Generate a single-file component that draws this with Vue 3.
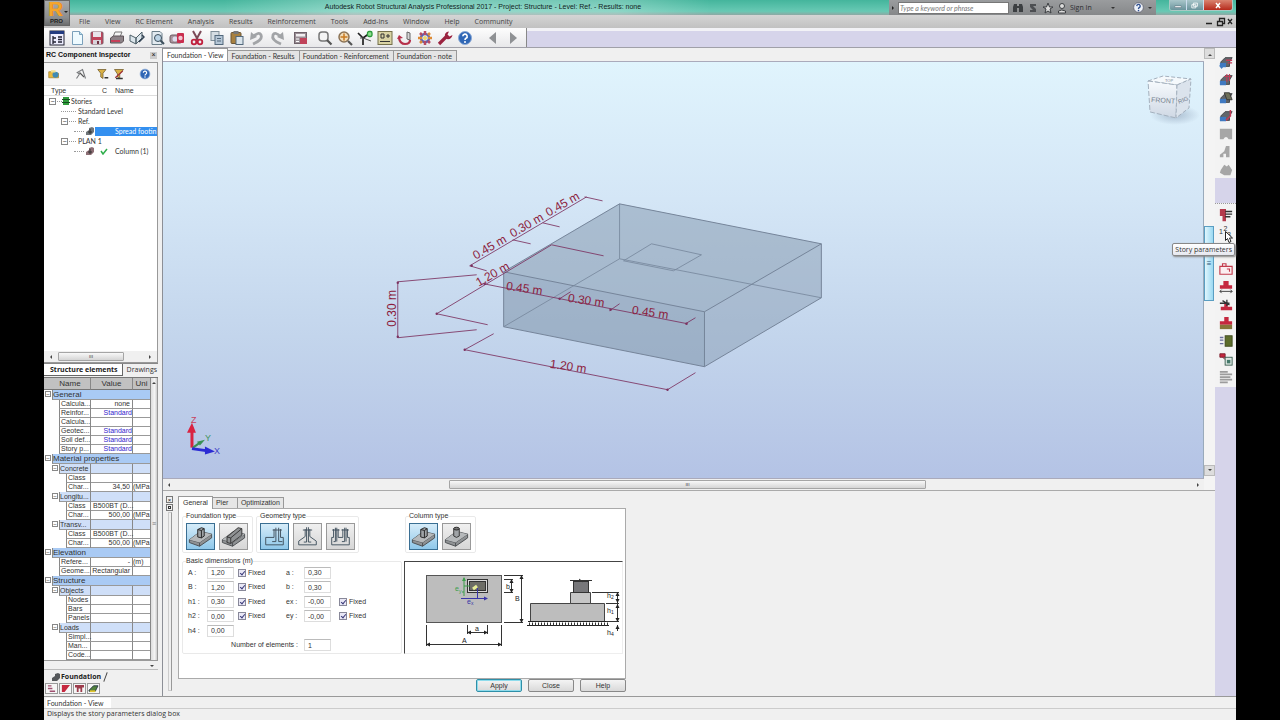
<script setup>
import { ref } from 'vue'

const menus = ['File', 'View', 'RC Element', 'Analysis', 'Results', 'Reinforcement', 'Tools', 'Add-Ins', 'Window', 'Help', 'Community']

const help = '<circle cx="8" cy="8" r="6.5" fill="#2f66b5" stroke="#8aa9d6"/><path d="M5.8 6.3a2.2 2.2 0 1 1 3.2 2q-1 .6-1 1.6" fill="none" stroke="#fff" stroke-width="1.6"/><circle cx="8" cy="12" r="1" fill="#fff"/>'

const tools = [
  { name: 'Inspector', art: '<rect x="1" y="1" width="14" height="14" fill="#eef" stroke="#223"/><rect x="1" y="1" width="14" height="3" fill="#223a80"/><path d="M4 6v8M4 8h3M4 12h3M9 7h4M9 9.500h4M9 12h4" stroke="#223" stroke-width="1.300"/>' },
  { name: 'New', art: '<path d="M3.500 1.500h7l3 3v10h-10z" fill="#eefaff" stroke="#7ba0bb"/><path d="M10.500 1.500v3h3" fill="#b9dff0" stroke="#7ba0bb"/>' },
  { name: 'Save', art: '<rect x="2" y="2" width="12" height="12" rx="1" fill="#c0435a" stroke="#7d5a68"/><rect x="4" y="2" width="8" height="5" fill="#e9e4ea"/><rect x="4" y="10" width="8" height="4" fill="#d9d3da"/><rect x="8" y="11" width="2" height="3" fill="#703040"/>' },
  { name: 'Print', art: '<path d="M4 7l2-5h7l-2 5" fill="#f5f5f5" stroke="#777"/><path d="M1.500 8l3-2h10v5l-2 2h-11z" fill="#8d8388" stroke="#5d5358"/><path d="M2 11h9" stroke="#c5405a" stroke-width="2"/>' },
  { name: 'Calculation note', art: '<path d="M1 5l6 3v6l-6-3zM7 8l6-6v6l-6 6z" fill="#dce6ec" stroke="#4d5f68"/><path d="M10 12l5-5-2-2" fill="none" stroke="#345" stroke-width="1.500"/>' },
  { name: 'Preview', art: '<path d="M3 1.500h8l2 2v11H3z" fill="#e2eaf0" stroke="#6a7d88"/><circle cx="9" cy="8" r="3.500" fill="#bcd4e6" stroke="#3d4f5c"/><path d="M11.500 10.500l3.500 3.500" stroke="#3d4f5c" stroke-width="2"/>' },
  { name: 'Screen capture', art: '<rect x="1" y="5" width="12" height="8" rx="2" fill="#a8949c" stroke="#6d5a62"/><circle cx="6" cy="9" r="2.500" fill="#dde"/><rect x="8" y="3" width="7" height="10" rx="1" fill="#c92e4e"/><circle cx="11.500" cy="8" r="2.200" fill="#f2c6d0"/>' },
  { name: 'Cut', art: '<path d="M4 1l5 9M12 1L7 10" stroke="#7c4a58" stroke-width="2"/><circle cx="5" cy="12" r="2.300" fill="none" stroke="#c0203e" stroke-width="1.800"/><circle cx="11" cy="12" r="2.300" fill="none" stroke="#c0203e" stroke-width="1.800"/>' },
  { name: 'Copy', art: '<rect x="2" y="1.500" width="8" height="9" fill="#d5dde3" stroke="#7e8d98"/><rect x="6" y="5.500" width="8" height="9" fill="#b5c6d6" stroke="#52687c"/><path d="M8 8.500h4M8 11h4" stroke="#52687c"/>' },
  { name: 'Paste', art: '<rect x="2" y="2.500" width="10" height="11" rx="1" fill="#a8803f" stroke="#6b5535"/><rect x="4.500" y="1" width="5" height="3" fill="#777"/><rect x="7" y="6.500" width="7" height="8" fill="#d9e3ea" stroke="#52687c"/>' },
  { name: 'Undo', art: '<path d="M4 14Q14 10 12 5Q10 1 4 7" fill="none" stroke="#a2a4a7" stroke-width="2.800"/><path d="M1 10l1-8 6 5z" fill="#a2a4a7"/>' },
  { name: 'Redo', art: '<path d="M12 14Q2 10 4 5Q6 1 12 7" fill="none" stroke="#a2a4a7" stroke-width="2.800"/><path d="M15 10l-1-8-6 5z" fill="#a2a4a7"/>' },
  { name: 'Calculator', gap: true, art: '<rect x="1.500" y="2.500" width="12" height="11" fill="#9a8f96" stroke="#6f626a"/><rect x="3" y="4" width="9" height="2.500" fill="#f1eef0"/><rect x="7" y="8" width="7" height="6" fill="#c0435a"/><path d="M3 9h3M3 11.500h3" stroke="#fff"/>' },
  { name: 'Zoom window', gap: true, art: '<rect x="2" y="2" width="9" height="9" rx="3" fill="#f4f4f4" stroke="#777" stroke-width="1.500"/><path d="M10 10l4.500 4.500" stroke="#555" stroke-width="2.200"/>' },
  { name: 'Zoom all', art: '<circle cx="7" cy="7" r="5" fill="#f2dcb8" stroke="#8c7355" stroke-width="1.500"/><path d="M7 3.500v7M3.500 7h7" stroke="#c87a20" stroke-width="1.500"/><path d="M11 11l4 4" stroke="#555" stroke-width="2.200"/>' },
  { name: 'Axes', art: '<path d="M1 3l5 5v7M6 8l7-5" fill="none" stroke="#222" stroke-width="1.700"/><path d="M6 8H3M6 8l8 3" stroke="#555"/><rect x="10.500" y="1.500" width="4.500" height="5" rx="1.500" fill="#8fe08f" stroke="#2a9a3a" stroke-width="1.300"/>' },
  { name: 'Display', art: '<rect x="1" y="1.500" width="14" height="13" fill="#d9d3a4" stroke="#75704a"/><path d="M4 4h3v4H4zM9 6h4M11 4v4M3 11.500h10" fill="none" stroke="#333"/>' },
  { name: 'Rotate view', art: '<path d="M10 2l3 1v7l-3-1z" fill="#d6d6d6" stroke="#666"/><path d="M2 8q1 6 6 6q5 0 5-4" fill="none" stroke="#b6304a" stroke-width="2.200"/><path d="M0 9l2-4 4 3z" fill="#b6304a"/>' },
  { name: 'Job preferences', art: '<circle cx="8" cy="8" r="4" fill="none" stroke="#5a61b5" stroke-width="2.500"/><path d="M8 1v4M8 11v4M3 3l2 2M11 11l2 2" stroke="#b84a62" stroke-width="2.500"/><path d="M1 8h4M11 8h4M3 13l2-2M11 5l2-2" stroke="#dd8a35" stroke-width="2.500"/><circle cx="8" cy="8" r="2" fill="#e8d670"/>' },
  { name: 'Tools', art: '<path d="M2 14l7-7" stroke="#9b2340" stroke-width="3.200"/><path d="M8 7q-1-5 4-5.500l-1.500 3 2 2 3-1.500q-1 5-6 4z" fill="#9b2340"/>' },
  { name: 'Help', art: help },
  { name: 'Back', wide: true, art: '<path d="M11 2v12L4 8z" fill="#8f9194"/>' },
  { name: 'Forward', art: '<path d="M5 2v12l7-6z" fill="#8f9194"/>' }
]

const inspectorTools = [
  { name: 'Open', art: '<path d="M1 5h6l1 2h6v6H1z" fill="#e8b83c" stroke="#a5842f"/><circle cx="10" cy="9" r="4" fill="#3f8bb5"/><path d="M4 3h6v3H4z" fill="#f3e08e"/>' },
  { name: 'Sketch', art: '<path d="M2 14l4-6-3-2 7-4 4 12" fill="none" stroke="#77797c" stroke-width="1.500"/><path d="M6 6l6 6" stroke="#555" stroke-width="1.500"/>' },
  { name: 'Filter', art: '<path d="M1 2h11l-4 5v7l-3-2V7z" fill="#d9b044" stroke="#6f5a2b"/><path d="M10 13h5" stroke="#333" stroke-width="2"/>' },
  { name: 'Filter off', art: '<path d="M2 2h12l-5 6v6l-3-2V8z" fill="#d9b044" stroke="#6f5a2b"/><path d="M3 13l10-9" stroke="#a5333a" stroke-width="1.500"/><path d="M4 14h9" stroke="#333" stroke-width="2"/>' },
  { name: 'Inspector help', art: help }
]

const reinf = (extra) => '<path d="M2 8l5-5h8l-3 5v5H3z" fill="#62666b" stroke="#3e4145"/><path d="M1 9h7v5H1z" fill="#3f79c0"/>' + extra
const sideTop = [
  { name: 'Slab reinforcement', art: reinf('<path d="M8 6h7M10 9h5" stroke="#c23b56" stroke-width="1.500"/><path d="M0 12h6l-3 4z" fill="#3f79c0"/>') },
  { name: 'Footing reinforcement', art: reinf('<path d="M9 1v9M12 1v8M6 4h8" stroke="#c23b56" stroke-width="1.300"/>') },
  { name: 'Beam reinforcement', art: reinf('<path d="M6 2h6l3 8H9z" fill="#6e6f58" stroke="#333"/>') },
  { name: 'Wall reinforcement', art: reinf('<path d="M13 1v7l-5 5" fill="none" stroke="#c23b56" stroke-width="1.800"/>') },
  { name: 'Opening', art: '<path d="M1 2h14v12h-4q-3-5-6 0H1z" fill="#a6a6a6"/>' },
  { name: 'Stair', art: '<path d="M8 1h4v13h-4v-4H5v4H1v-3l5-4z" fill="#a6a6a6"/>' },
  { name: 'Hand', art: '<path d="M2 8l4-6 3 2 2-2 4 6-2 6H6l-5-3z" fill="#a6a6a6"/>' }
]
const sideBottom = [
  { name: 'Rebar list', art: '<path d="M1 1h7v14H4V9H1z" fill="#b43a4c"/><path d="M7 4h8M7 7h8M7 10h6" stroke="#333" stroke-width="1.600"/>' },
  { name: 'Story', art: '<g font-family="Liberation Sans, sans-serif" font-size="8" fill="#333"><text x="0" y="9">1</text><text x="5" y="6">2</text><text x="9" y="12">3</text></g>' },
  { name: 'Levels', art: '<path d="M2 8h12" stroke="#555"/>' },
  { name: 'Footing options', art: '<path d="M1 5h14v9H1zM4 5V2h4v3" fill="#fbeef0" stroke="#c23b4c" stroke-width="1.300"/><path d="M9 8h3v3" fill="none" stroke="#c23b4c" stroke-width="1.300"/>' },
  { name: 'Dimensions', art: '<path d="M5 1h6v5h4v4H1V6h4z" fill="#c5283f"/><path d="M1 13h14M3 11l-2 2 2 2M13 11l2 2-2 2" fill="none" stroke="#333"/>' },
  { name: 'Loads', art: '<path d="M6 5h4v5h5v4H2v-4h4z" fill="#c5283f"/><path d="M1 6h11M9 2v7M4 3l8 5" stroke="#333" stroke-width="1.500"/>' },
  { name: 'Soil', art: '<path d="M6 1h5v5h4v4H1V6h5z" fill="#c5283f"/><rect x="1" y="10" width="14" height="5" fill="#86763a"/>' },
  { name: 'Soil profile', art: '<rect x="7" y="2" width="8" height="12" fill="#5d6d2c" stroke="#3d481c"/><path d="M1 4h4M1 7h4M1 11h4" stroke="#6c6f9c" stroke-width="1.500"/>' },
  { name: 'Calculate', art: '<path d="M1 2h6v4H1zM4 6l5 4" fill="#c5283f" stroke="#7a1c2c"/><rect x="7" y="6" width="8" height="9" fill="#dfe9e4" stroke="#33574a"/><path d="M9 9h4v4H9z" fill="#44796a"/>' },
  { name: 'Notes', art: '<path d="M1 2h9M1 5h14M1 8h12M1 11h14M1 14h9" stroke="#9c9c9c" stroke-width="2"/>' }
]

const tree = [
  { text: 'Stories', depth: 0, box: true, icon: 'story' },
  { text: 'Standard Level', depth: 1 },
  { text: 'Ref.', depth: 1, box: true },
  { name: 'Spread footin', depth: 2, icon: 'part', selected: true },
  { text: 'PLAN 1', depth: 1, box: true },
  { name: 'Column (1)', depth: 2, icon: 'part', check: true }
]

const props = [
  { l: 0, n: 'General', h: true },
  { l: 1, n: 'Calcula...', v: 'none' },
  { l: 1, n: 'Reinfor...', v: 'Standard', link: true },
  { l: 1, n: 'Calcula...' },
  { l: 1, n: 'Geotec...', v: 'Standard', link: true },
  { l: 1, n: 'Soil def...', v: 'Standard', link: true },
  { l: 1, n: 'Story p...', v: 'Standard', link: true },
  { l: 0, n: 'Material properties', h: true },
  { l: 1, n: 'Concrete', h: true },
  { l: 2, n: 'Class' },
  { l: 2, n: 'Char...', v: '34,50', u: '(MPa' },
  { l: 1, n: 'Longitu...', h: true },
  { l: 2, n: 'Class', v: 'B500BT (D...', start: true },
  { l: 2, n: 'Char...', v: '500,00', u: '(MPa' },
  { l: 1, n: 'Transv...', h: true },
  { l: 2, n: 'Class', v: 'B500BT (D...', start: true },
  { l: 2, n: 'Char...', v: '500,00', u: '(MPa' },
  { l: 0, n: 'Elevation', h: true },
  { l: 1, n: 'Refere...', v: '-', u: '(m)' },
  { l: 1, n: 'Geome...', v: 'Rectangular' },
  { l: 0, n: 'Structure', h: true },
  { l: 1, n: 'Objects', h: true },
  { l: 2, n: 'Nodes' },
  { l: 2, n: 'Bars' },
  { l: 2, n: 'Panels' },
  { l: 1, n: 'Loads', h: true },
  { l: 2, n: 'Simpl...' },
  { l: 2, n: 'Man...' },
  { l: 2, n: 'Code...' }
]

const slab = '<path d="M2 17L14 8l12 3v4L13 24 2 20z" fill="#8f9294" stroke="#4a4d50"/><path d="M2 17l11 3v4M13 20l13-9" fill="none" stroke="#4a4d50"/><path d="M2 17L14 8l12 3-13 9z" fill="#b6b9bb"/>'
const square = slab + '<path d="M11 6l4-2 3 1v8l-3 2-4-1z" fill="#9fa3a6" stroke="#222"/><path d="M11 6l4 1 3-2M15 7v8" fill="none" stroke="#222"/>'
const round = slab + '<path d="M11 5v8q3 3 6 0V5z" fill="#9fa3a6" stroke="#333"/><ellipse cx="14" cy="5" rx="3" ry="1.500" fill="#777" stroke="#222"/>'
const strip = slab + '<path d="M7 14l12-10 4 1v7l-12 9-4-1z" fill="#8f9294" stroke="#333"/><path d="M7 14l4 1 12-10M11 15v6" fill="none" stroke="#333"/>'
const line = (d) => `<path d="${d}" fill="none" stroke="#3f4f5c"/>`
const groups = [
  { title: 'Foundation type', cls: 'found', items: [{ n: 'Spread', on: true, art: square }, { n: 'Continuous', art: strip }] },
  { title: 'Geometry type', cls: 'geo', items: [
    { n: 'Block', on: true, art: line('M4.500 14.500h9v-9M20.500 5.500v9h3v8h-19v-8M15.500 4v15h-4M18.500 4v15h4M12 6.500h10') },
    { n: 'Sloped', art: line('M11.500 5.500v8l-7 5v4h19v-4l-7-5v-8M13 3.500v16h-3M15 3.500v16h3M9 6.500h10') },
    { n: 'Double', art: line('M6.500 5.500v9h-2v8h19v-8h-2v-9M11.500 5.500v9h5v-9M8.500 4v15h-2M10 4v15M18.500 4v15h-3M20 4v15M5 6.500h8M15 6.500h8') }] },
  { title: 'Column type', cls: 'coltype', items: [{ n: 'Rectangular column', on: true, art: square }, { n: 'Round column', art: round }] }
]

const dims = ref([
  { k: 'A', v: '1,20', fixed: true },
  { k: 'B', v: '1,20', fixed: true },
  { k: 'h1', v: '0,30', fixed: true },
  { k: 'h2', v: '0,00', fixed: true },
  { k: 'h4', v: '0,00' }
])
const offsets = ref([
  { k: 'a', v: '0,30' },
  { k: 'b', v: '0,30' },
  { k: 'ex', v: '-0,00', fixed: true },
  { k: 'ey', v: '-0,00', fixed: true }
])
const count = ref('1')
const viewTabs = ['View', 'Results', 'Reinforcement', 'note']
</script>

<template>
  <div class="desk">
    <div class="frame">
      <button class="logo" aria-label="Application menu"><span class="r">R</span><span class="pro">PRO</span><i></i></button>

      <header class="title">
        <h1>Autodesk Robot Structural Analysis Professional 2017 - Project: Structure - Level: Ref. - Results: none</h1>
        <div class="info">
          <span class="tri"></span>
          <input type="text" placeholder="Type a keyword or phrase" aria-label="Type a keyword or phrase">
          <svg class="infoart" viewBox="0 0 56 14">
            <g fill="#3c3f42"><path d="M4 3h3v8H3V6zM9 3h3l1 3v5H9zM7 5h2v2H7z" /><path d="M20 3h6v2h-3l3 3v3h-6V9h3l-3-3z" opacity=".8" /></g>
            <path d="M38 2l1.500 4H43l-3 2 1 4-3-2-3 2 1-4-3-2h3.500z" fill="#ddd" stroke="#3c3f42" />
            <circle cx="52" cy="5" r="2.500" fill="#ddd" stroke="#3c3f42" /><path d="M48.500 12v-2q3-2 7 0v2z" fill="#ddd" stroke="#3c3f42" />
          </svg>
          <button class="sign">Sign In</button>
          <span class="caret"></span>
          <svg class="q" viewBox="0 0 16 16"><circle cx="8" cy="8" r="7" fill="#eef2f8" stroke="#556" /><path d="M5.500 6a2.500 2.500 0 1 1 3.500 2.300q-1 .6-1 1.700" fill="none" stroke="#2f4f90" stroke-width="2" /><circle cx="8" cy="12.500" r="1.200" fill="#2f4f90" /></svg>
          <span class="caret"></span>
        </div>
        <div class="winbtns">
          <button aria-label="Minimize"><svg viewBox="0 0 20 11"><path d="M6 6h8v2H6z" fill="#fff" stroke="#456" stroke-width=".5" /></svg></button>
          <button aria-label="Restore"><svg viewBox="0 0 20 11"><path d="M8 2.500h5v4h-5zM6 4.500h5v4H6z" fill="none" stroke="#fff" /></svg></button>
          <button class="x" aria-label="Close window"><svg viewBox="0 0 20 11"><path d="M8 3l4 5M12 3L8 8" stroke="#fff" stroke-width="1.500" /></svg></button>
        </div>
      </header>

      <nav class="menu">
        <button v-for="m in menus" :key="m">{{ m }}</button>
        <svg class="mdi" viewBox="0 0 30 12"><path d="M2 7.500h6M13.500 5.500h5v4h-5zM15.500 5V2.500h5v5h-2M24 3l4 5M28 3l-4 5" fill="none" stroke="#222" stroke-width="1.300" /></svg>
      </nav>

      <div class="bar">
        <div class="tools">
          <button v-for="t in tools" :key="t.name" :class="{ gap: t.gap, wide: t.wide }" :aria-label="t.name"><svg viewBox="0 0 16 16" v-html="t.art"></svg></button>
        </div>
        <div class="rest"></div>
      </div>

      <main class="work">
        <aside class="left">
          <div class="ihead"><b>RC Component Inspector</b><button aria-label="Close inspector">×</button></div>
          <div class="ibox">
            <div class="itools">
              <button v-for="t in inspectorTools" :key="t.name" :aria-label="t.name"><svg viewBox="0 0 16 16" v-html="t.art"></svg></button>
            </div>
            <div class="ihdr"><span>Type</span><span>C</span><span>Name</span></div>
            <ul class="tree">
              <li v-for="(r, i) in tree" :key="i" :class="['d' + r.depth, { sel: r.selected }]">
                <span class="branch"><i v-if="r.box">−</i></span>
                <svg v-if="r.icon === 'story'" class="ico" viewBox="0 0 8 8"><path d="M1 0h6v8H1z" fill="#2f9c3c" /><path d="M0 2.500h8M0 5.500h8" stroke="#174d20" /></svg>
                <svg v-if="r.icon === 'part'" class="ico" viewBox="0 0 8 8"><path d="M0 5l3-2V1l3-1 2 1v4L5 8H0z" :fill="r.check ? '#8c6e74' : '#6f7478'" /><path d="M2 5h4M4 2v5" stroke="#333" /></svg>
                <span v-if="r.text">{{ r.text }}</span>
                <span v-if="r.name" class="state"><svg v-if="r.check" viewBox="0 0 8 8"><path d="M1 4l2 3 4-5" fill="none" stroke="#2fae4b" stroke-width="1.500" /></svg></span>
                <span v-if="r.name" class="nm">{{ r.name }}</span>
              </li>
            </ul>
            <div class="hs"><i class="al"></i><span class="thumb">ııı</span><i class="ar"></i></div>
          </div>
          <div class="itabs"><button class="on">Structure elements</button><button>Drawings</button></div>

          <div class="pgrid">
            <table>
              <colgroup><col class="c1"><col class="c2"><col class="c3"></colgroup>
              <thead><tr><th>Name</th><th>Value</th><th>Uni</th></tr></thead>
              <tbody>
                <tr v-for="(p, i) in props" :key="i" :class="['l' + p.l, { h: p.h, top: p.h && p.l === 0 }]">
                  <td :colspan="p.h && p.l === 0 ? 3 : 1" class="n"><div><i v-if="p.h">−</i><span>{{ p.n }}</span></div></td>
                  <template v-if="!(p.h && p.l === 0)">
                    <td :class="['v', { start: p.start, link: p.link }]">{{ p.v }}</td>
                    <td class="u">{{ p.u }}</td>
                  </template>
                </tr>
              </tbody>
            </table>
            <div class="pscroll"><i class="au"></i><span>≡</span></div>
          </div>
          <div class="pfoot"><i class="ad"></i></div>
          <div class="ftab"><svg viewBox="0 0 8 8"><path d="M0 5l3-2V1l3-1 2 1v4L5 8H0z" fill="#55585b" /></svg><b>Foundation</b><em></em></div>
          <div class="ficons">
            <button aria-label="Geometry"><svg viewBox="0 0 12 10"><path d="M2 2h4M2 5h5M4 8h6" stroke="#a05070" stroke-width="1.500" /></svg></button>
            <button aria-label="Loads view"><svg viewBox="0 0 12 10"><path d="M2 1h9L5 9H2z" fill="#c5283f" /></svg></button>
            <button aria-label="Reinforcement view"><svg viewBox="0 0 12 10"><path d="M1 1h10v3H9v5H7V5H5v4H3V4H1z" fill="#9c3c4c" /></svg></button>
            <button aria-label="Drawing view"><svg viewBox="0 0 12 10"><path d="M1 7l5-5h5L8 8H1z" fill="#51813b" stroke="#234" /><path d="M2 8h6" stroke="#e3c62f" stroke-width="2" /></svg></button>
          </div>
        </aside>

        <section class="center">
          <div class="upper">
            <div class="vcol">
              <div class="vtabs"><button v-for="(t, i) in viewTabs" :key="t" :class="{ on: i === 0 }">Foundation - {{ t }}</button></div>
              <div class="view">
                <svg viewBox="163 62 1041 415" preserveAspectRatio="xMinYMin meet">
                  <defs>
                    <linearGradient id="side" x1="0" y1="0" x2="0" y2="1"><stop offset="0" stop-color="#f7fafd" /><stop offset="1" stop-color="#cfd8e4" /></linearGradient>
                    <radialGradient id="shade"><stop offset="0" stop-color="#8b9db5" stop-opacity=".6" /><stop offset="1" stop-color="#8b9db5" stop-opacity="0" /></radialGradient>
                  </defs>
                  <path d="M620 204L822 244V298L705 367L504 327V272Z" fill="#8699ae" fill-opacity=".46" />
                  <path d="M504 272L705 312V367L504 327Z" fill="#8194ae" fill-opacity=".22" />
                  <path d="M620 204L822 244L705 312L504 272Z" fill="#8fa5b4" fill-opacity=".12" />
                  <g fill="none" stroke="#75859a" stroke-width="1">
                    <path d="M620 204L822 244L705 312L504 272ZM504 272V327L705 367V312M705 367L822 298V244" />
                    <path d="M620 204V259L822 298M620 259L504 327M652 244L702 255L674 271L624 261Z" stroke-opacity=".8" />
                  </g>
                  <g fill="none" stroke="#7c3260" stroke-width="1" stroke-opacity=".85">
                    <path d="M470 266L587 197M470 266L487 271M513 240L531 244M543 223L560 227M585 197L603 201" />
                    <path d="M437 314L552 245L604 256M437 314L488 325" />
                    <path d="M398 282V338M398 282L477 275M398 338L477 330" />
                    <path d="M484 284L688 324M560 299L571 292M610 311L620 304M686 324L696 318" />
                    <path d="M465 350L668 390L696 373M465 350L494 334" />
                  </g>
                  <g fill="#7c3260"><circle v-for="(c, i) in [[472,266],[437,314],[398,283],[398,337],[465,350],[668,390],[560,299],[611,310],[687,324],[485,284]]" :key="i" :cx="c[0]" :cy="c[1]" r="1.200" /></g>
                  <g class="dim">
                    <text transform="translate(476 260) rotate(-30)">0.45 m</text>
                    <text transform="translate(513 238) rotate(-30)">0.30 m</text>
                    <text transform="translate(549 217) rotate(-30)">0.45 m</text>
                    <text transform="translate(479 287) rotate(-30)">1.20 m</text>
                    <text transform="translate(396 327) rotate(-90)">0.30 m</text>
                    <text transform="translate(506 290) rotate(8)">0.45 m</text>
                    <text transform="translate(568 302) rotate(8)">0.30 m</text>
                    <text transform="translate(632 314) rotate(8)">0.45 m</text>
                    <text transform="translate(550 368) rotate(8)">1.20 m</text>
                  </g>
                  <g>
                    <path d="M192 448V428" stroke="#d92342" stroke-width="3" /><path d="M187 433L192 423L196 433Z" fill="#d92342" />
                    <path d="M193 448L200 443" stroke="#3a9154" stroke-width="2" /><path d="M197 442L205 440L200 446Z" fill="#3a9154" />
                    <path d="M192 449L206 451" stroke="#2b2bd4" stroke-width="3" /><path d="M205 447L215 452L205 455Z" fill="#2b2bd4" />
                    <g font-size="9"><text x="191" y="423" fill="#c8405c">Z</text><text x="205" y="441" fill="#3f9460">Y</text><text x="214" y="454" fill="#4242c6">X</text></g>
                  </g>
                  <g>
                    <ellipse cx="1176" cy="115" rx="25" ry="10" fill="url(#shade)" />
                    <path d="M1149 81L1164 76L1192 79L1178 85Z" fill="#f5f9fc" stroke="#a4b0bd" stroke-dasharray="4 2" />
                    <path d="M1149 81L1178 85L1177 118L1151 112Z" fill="url(#side)" stroke="#a4b0bd" stroke-dasharray="5 2" />
                    <path d="M1178 85L1192 79L1190 108L1177 118Z" fill="#dbe3ec" stroke="#a4b0bd" stroke-dasharray="4 2" />
                    <g fill="#76818e" font-size="7"><text transform="translate(1152 102) rotate(4)">FRONT</text><text transform="translate(1180 104) rotate(-22)" font-size="6">RIG</text><text x="1166" y="82" font-size="4">TOP</text></g>
                  </g>
                </svg>
              </div>
              <div class="hs big"><i class="al"></i><span class="thumb">ııı</span><i class="ar"></i></div>
            </div>
            <div class="vs"><span class="end"><i class="au"></i></span><span class="track"><span class="vthumb">≡</span></span><span class="end"><i class="ad"></i></span><span class="corner"></span></div>
          </div>

          <div class="lower">
            <div class="grip"><button aria-label="Close panel">×</button><button aria-label="Dock panel"><i></i></button><span></span></div>
            <form class="dialog" @submit.prevent>
              <div class="dtabs"><button type="button" class="on">General</button><button type="button">Pier</button><button type="button">Optimization</button></div>
              <div class="page">
                <div class="types">
                  <fieldset v-for="g in groups" :key="g.title" :class="g.cls">
                    <legend>{{ g.title }}</legend>
                    <button v-for="b in g.items" :key="b.n" type="button" :class="{ on: b.on }" :aria-label="b.n" :aria-pressed="!!b.on"><svg viewBox="0 0 28 27" v-html="b.art"></svg></button>
                  </fieldset>
                </div>
                <div class="geom">
                  <fieldset class="basic">
                    <legend>Basic dimensions (m)</legend>
                    <div class="cols">
                      <div class="colA">
                        <div v-for="d in dims" :key="d.k" class="row">
                          <label :for="'d-' + d.k">{{ d.k }} :</label>
                          <input :id="'d-' + d.k" v-model="d.v" type="text">
                          <label v-if="d.fixed !== undefined" class="fx"><input v-model="d.fixed" type="checkbox">Fixed</label>
                        </div>
                      </div>
                      <div class="colB">
                        <div v-for="d in offsets" :key="d.k" class="row">
                          <label :for="'o-' + d.k">{{ d.k }} :</label>
                          <input :id="'o-' + d.k" v-model="d.v" type="text">
                          <label v-if="d.fixed !== undefined" class="fx"><input v-model="d.fixed" type="checkbox">Fixed</label>
                        </div>
                      </div>
                    </div>
                    <div class="count"><label for="count">Number of elements :</label><input id="count" v-model="count" type="text"></div>
                  </fieldset>
                  <div class="scheme">
                    <svg viewBox="405 562 217 91">
                      <rect x="426.500" y="575.500" width="75" height="47" fill="#bdbdbd" stroke="#555" />
                      <rect x="467.500" y="579.500" width="20" height="13" fill="#d9d9d9" stroke="#333" />
                      <rect x="469.500" y="581.500" width="16" height="9" fill="#6d6d66" stroke="#333" />
                      <path d="M473 589l4-3" stroke="#e8ee9a" stroke-width="3" />
                      <path d="M464 578v18M464 586h6M464 592h-2" stroke="#3c9e4a" fill="none" /><path d="M464 577l-2 4h4z" fill="#3c9e4a" />
                      <path d="M461 598.500h26M477.500 588v11" stroke="#3a36a8" fill="none" /><path d="M488 598.500l-4-2v4z" fill="#3a36a8" />
                      <g stroke="#333" fill="none"><path d="M504 579.500h9M504 592.500h9M511.500 580v12M504 575.500h19M504 622.500h19M521.500 576v46M467.500 625v9M487.500 625v9M468 632.500h19M426.500 625v21M501.500 625v21M427 644.500h74" /></g>
                      <g fill="#222"><path d="M511.500 579l-2 4h4zM511.500 593l-2-4h4zM521.500 575l-2 4h4zM521.500 623l-2-4h4zM467 632.500l4-2v4zM488 632.500l-4-2v4zM426 644.500l4-2v4zM502 644.500l-4-2v4z" /></g>
                      <path d="M530.500 603.500h74v18h-74z" fill="#bdbdbd" stroke="#444" /><path d="M570.500 592.500h20v11h-20z" fill="#c6c6c6" stroke="#444" />
                      <rect x="573.500" y="581.500" width="15" height="11" fill="#77777a" stroke="#333" /><path d="M570 580.500h22M579 579l4 3" stroke="#333" />
                      <path d="M528 621.500h79M527 625.500h82" stroke="#222" /><path d="M529 624h79" stroke="#333" stroke-width="3" stroke-dasharray="1 2" />
                      <g stroke="#333" fill="none"><path d="M592 592.500h27M606 603.500h13M606 621.500h13M617.500 593v29M617.500 625v6" /></g>
                      <g fill="#222"><path d="M617.500 592l-2 4h4zM617.500 603l-2-4h4zM617.500 604l-2 4h4zM617.500 622l-2-4h4zM617.500 625l-2 4h4z" /></g>
                      <g class="st"><text x="506" y="589">b</text><text x="515" y="601">B</text><text x="475" y="631">a</text><text x="462" y="643">A</text><text x="607" y="598">h<tspan font-size="5" dy="1">2</tspan></text><text x="607" y="613">h<tspan font-size="5" dy="1">1</tspan></text><text x="607" y="635">h<tspan font-size="5" dy="1">4</tspan></text><text x="455" y="591" fill="#3c9e4a">e<tspan font-size="5" dy="2">y</tspan></text><text x="467" y="604" fill="#3a36a8">e<tspan font-size="5" dy="1">x</tspan></text></g>
                    </svg>
                  </div>
                </div>
              </div>
              <div class="acts"><button type="submit" class="def">Apply</button><button type="button">Close</button><button type="button">Help</button></div>
            </form>
          </div>
        </section>

        <aside class="right">
          <div class="sg"><button v-for="t in sideTop" :key="t.name" :aria-label="t.name"><svg viewBox="0 0 16 16" v-html="t.art"></svg></button></div>
          <div class="sgap"></div>
          <div class="sg two">
            <button v-for="t in sideBottom" :key="t.name" :aria-label="t.name"><svg viewBox="0 0 16 16" v-html="t.art"></svg></button>
            <span class="tip" role="tooltip">Story parameters</span>
            <svg class="cursor" viewBox="0 0 8 12"><path d="M.5.500v9l2-2 1.500 4 2-1-1.500-3.500h3z" fill="#fff" stroke="#222" /></svg>
          </div>
          <div class="sfill"></div>
        </aside>
      </main>

      <div class="mditabs"><button>Foundation - View</button></div>
      <footer class="status">Displays the story parameters dialog box</footer>
    </div>
  </div>
</template>

<style>
html, body { margin: 0; background: #000; }
</style>

<style scoped>
* { box-sizing: border-box; }
.desk { min-height: 100vh; padding: 0 44px; background: #000; display: flex; font: 7px/8px "Liberation Sans", Arial, sans-serif; color: #333; }
.frame { flex: 1; min-width: 0; position: relative; display: flex; flex-direction: column; background: #f0f0f0; }
button { font: inherit; color: inherit; background: none; border: 0; padding: 0; margin: 0; }
input { font: inherit; color: inherit; margin: 0; }
svg { display: block; }
ul { list-style: none; margin: 0; padding: 0; }

.logo { position: absolute; left: 0; top: 0; width: 26px; height: 26px; z-index: 2; background: linear-gradient(#a9abac, #8b8d8e 70%, #6b6d6e); border: 1px solid #666; display: flex; flex-direction: column; align-items: flex-start; padding-left: 3px; }
.logo .r { font: bold 20px/17px "Liberation Sans", sans-serif; color: #f5a52c; text-shadow: 1px 0 #d88818; }
.logo .pro { font-weight: bold; font-size: 6px; line-height: 6px; color: #222; padding-left: 2px; }
.logo i { position: absolute; right: 1px; top: 10px; border: 2px solid transparent; border-top-color: #222; }

.title { height: 15px; display: flex; align-items: flex-start; padding-left: 26px; background: linear-gradient(90deg, rgba(255,255,255,0) 15%, rgba(255,255,255,.3) 26%, rgba(255,255,255,.25) 48%, rgba(255,255,255,0) 56%), linear-gradient(#44b59c, #68c9b4 75%, #8fa8a4); }
.title h1 { flex: 1; text-align: center; margin: 0; padding-left: 7px; font-weight: 400; font-size: 7px; line-height: 14px; color: #122; white-space: nowrap; }
.info { width: 267px; height: 15px; background: linear-gradient(#9a9c9e, #86888a); display: flex; align-items: center; color: #2b2d2f; }
.info .tri { border: 2px solid transparent; border-left-color: #222; margin: 0 2px 0 3px; }
.info input { width: 111px; height: 12px; border: 1px solid #777; background: #fff; padding: 0 1px; font-family: Lato, sans-serif; font-style: italic; }
.info input::placeholder { color: #777; }
.infoart { width: 56px; height: 14px; margin-left: 1px; }
.sign { margin-left: 4px; font-family: "Open Sans", sans-serif; white-space: nowrap; }
.caret { border: 2px solid transparent; border-top-color: #333; margin: 2px 4px 0 auto; }
.q { width: 11px; height: 11px; margin: 0 0 0 14px; }
.q + .caret { margin-left: 4px; }
.winbtns { display: flex; margin: 0 3px 0 13px; height: 11px; border: 1px solid #a9c9c4; border-top: 0; border-radius: 0 0 3px 3px; overflow: hidden; }
.winbtns button { width: 17px; background: linear-gradient(#a9c6ca, #6a949c); border-right: 1px solid #cde; }
.winbtns .x { width: 28px; background: linear-gradient(#d9836f, #b62a1c); border: 0; }
.winbtns svg { width: 100%; height: 11px; }

.menu { height: 13px; display: flex; gap: 15px; align-items: center; padding-left: 35px; background: linear-gradient(#d5d5d5, #c1c1c1); font-family: "Open Sans", sans-serif; color: #444; }
.menu button { white-space: nowrap; }
.mdi { width: 30px; height: 12px; margin: 0 2px 0 auto; }

.bar { height: 20px; display: flex; border-bottom: 1px solid #a0a0a8; }
.tools { display: flex; align-items: center; gap: 4px; padding: 0 5px 0 5px; background: linear-gradient(#fdfdfd, #e8e8ea); border-right: 1px solid #888; }
.tools button { width: 16px; height: 16px; }
.tools .gap { margin-left: 4px; }
.tools .wide { margin-left: 8px; }
.tools svg { width: 16px; height: 16px; }
.rest { flex: 1; border-top: 3px solid #f2f2f6; background: #d6d4ea; }

.work { flex: 1; display: flex; min-height: 0; }
.left { width: 119px; flex: none; padding-right: 4px; border-right: 1px solid #8c8f96; display: flex; flex-direction: column; }
.ihead { height: 14px; display: flex; align-items: center; padding-left: 2px; color: #111; justify-content: space-between; }
.ihead b { white-space: nowrap; font-size: 7px; }
.ihead button { width: 7px; height: 7px; line-height: 6px; background: #ccc; margin-right: 1px; }
.ibox { flex: 1; display: flex; flex-direction: column; border: 1px solid #999; border-left: 0; background: #fff; }
.itools { height: 22px; background: #f4f4f4; display: flex; align-items: center; padding-left: 4px; }
.itools button { width: 13px; height: 13px; }
.itools svg { width: 12px; height: 12px; }
.itools button:nth-child(2) { margin-left: 14px; }
.itools button:nth-child(3) { margin-left: 9px; }
.itools button:nth-child(4) { margin-left: 3px; }
.itools button:nth-child(5) { margin-left: 13px; }
.ihdr { height: 11px; display: grid; grid-template-columns: 51px 13px 1fr; padding-left: 7px; align-items: center; border-top: 1px solid #ddd; border-bottom: 1px solid #ddd; }
.tree { flex: 1; font: 7px/9px Lato, "Liberation Sans", sans-serif; }
.tree li { height: 10px; display: flex; align-items: center; white-space: nowrap; position: relative; }
.tree .d0 { padding-left: 5px; }
.tree .d1 { padding-left: 17px; }
.tree .d2 { padding-left: 30px; }
.branch { width: 13px; height: 1px; border-top: 1px dotted #999; position: relative; margin-right: 2px; flex: none; }
.d1 .branch { width: 15px; margin-right: 2px; }
.d2 .branch { width: 10px; }
.branch i { position: absolute; left: 0; top: -4px; width: 7px; height: 7px; border: 1px solid #888; background: #fff; font: 7px/5px "Liberation Sans", sans-serif; text-align: center; }
.ico { width: 8px; height: 8px; margin-right: 1px; flex: none; }
.d0 .branch { margin-right: 0; }
.state { width: 20px; height: 10px; padding: 1px 0 0 5px; flex: none; }
.state svg { width: 8px; height: 8px; }
.nm { flex: 1; height: 9px; line-height: 9px; }
.sel .state { height: 9px; background: #3390f0; }
.sel .nm { background: #3390f0; color: #fff; }
.hs { height: 11px; display: flex; align-items: center; background: #f0f0f0; padding: 0 4px; }
.al { border: 2px solid transparent; border-right-color: #444; }
.ar { border: 2px solid transparent; border-left-color: #444; margin-left: auto; }
.au { border: 2px solid transparent; border-bottom-color: #444; }
.ad { border: 2px solid transparent; border-top-color: #444; }
.thumb { width: 66px; height: 9px; margin-left: 6px; border: 1px solid #a5a5a5; border-radius: 1px; background: linear-gradient(#f8f8f8, #d5d5d5); text-align: center; line-height: 7px; font-size: 5px; }
.itabs { height: 14px; display: flex; border-top: 1px solid #888; font-family: "Open Sans", sans-serif; }
.itabs button { height: 12px; padding: 0 2px 0 4px; white-space: nowrap; }
.itabs .on { background: #fff; font-weight: bold; color: #222; padding: 0 4px 0 6px; border-bottom: 1px solid #666; border-right: 1px solid #666; }

.pgrid { display: flex; border-top: 1px solid #777; background: #fff; }
table { width: 106px; table-layout: fixed; border-spacing: 0; border-collapse: separate; flex: none; }
.c1 { width: 47px; } .c2 { width: 42px; } .c3 { width: 17px; }
th { height: 12px; padding: 0; font-weight: 400; font-size: 8px; background: #c1c1c1; border-right: 1px solid #888; border-bottom: 1px solid #777; }
th:first-child { padding-left: 6px; }
th:last-child, td:last-child { border-right: 0; }
td { height: 9px; padding: 0; line-height: 8px; border-bottom: 1px solid #999; border-right: 1px solid #888; white-space: nowrap; }
.h td { height: 10px; line-height: 9px; background: #cfdff8; }
.h.top td { background: #b0d0f6; font-size: 8px; }
td.n { border-bottom: 0; background: #fff; }
.h.top td.n { background: #fff; }
.h:not(.top) td.n { background: #fff; }
.n div { display: flex; position: relative; }
.n span { flex: 1; border-bottom: 1px solid #999; border-left: 1px solid #888; padding-left: 1px; }
.h .n span { background: #cfdff8; padding-left: 0; }
.top .n span { background: #a9caf4; }
.l0 .n div { padding-left: 8px; }
.l1 .n div { padding-left: 15px; }
.l2 .n div { padding-left: 22px; }
.n i { position: absolute; top: 1px; width: 6px; height: 6px; border: 1px solid #888; font: 6px/4px "Liberation Sans", sans-serif; text-align: center; background: #fff; }
.l0 .n i { left: 1px; }
.l1 .n i { left: 8px; }
.v { text-align: right; padding-right: 2px; }
.v.start { text-align: left; padding: 0 0 0 2px; }
.v.link { color: #3322cc; padding-right: 0; }
.pscroll { flex: 1; background: linear-gradient(90deg, #ddd, #f4f4f4 60%, #ccc); border-left: 1px solid #888; border-right: 1px solid #999; display: flex; flex-direction: column; align-items: center; justify-content: space-between; padding: 2px 0 132px; color: #777; }
.pfoot { height: 9px; border-top: 1px solid #999; display: flex; justify-content: flex-end; padding: 4px 4px 0 0; }
.ftab { height: 14px; display: flex; align-items: center; padding-left: 8px; border-top: 1px solid #bbb; color: #222; gap: 1px; font-family: "Open Sans", sans-serif; }
.ftab svg { width: 8px; height: 8px; }
.ftab em { width: 1px; height: 10px; background: #444; transform: rotate(20deg); margin-left: 3px; }
.ficons { height: 13px; display: flex; gap: 1px; padding-left: 1px; }
.ficons button { width: 13px; height: 11px; border: 1px solid #999; background: #f6f6f6; }
.ficons svg { width: 11px; height: 9px; }

.center { flex: 1; min-width: 0; display: flex; flex-direction: column; }
.upper { flex: 1; display: flex; }
.vcol { flex: 1; min-width: 0; display: flex; flex-direction: column; }
.vtabs { height: 14px; display: flex; align-items: flex-end; border-bottom: 1px solid #aab; font: 7px/9px Lato, "Liberation Sans", sans-serif; }
.vtabs button { height: 11px; padding: 0 4px 0 3px; border: 1px solid #999; border-left: 0; border-bottom: 0; background: #e4e4e4; white-space: nowrap; }
.vtabs .on { height: 13px; background: #fff; padding: 0 4px; }
.view { flex: 1; background: linear-gradient(#e0f4fd, #d4e6f6 33%, #c3d5ec 66%, #b4c3e5); overflow: hidden; border-right: 1px solid #9ab; }
.view svg { width: 100%; height: auto; min-width: 900px; font-family: "Liberation Sans", sans-serif; }
.dim { font-size: 12px; fill: #8c1c3c; }
.big { padding: 0 3px; border-top: 1px solid #aab; height: 12px; }
.big .thumb { width: 46%; margin-left: 27%; }
.vs { width: 11px; display: flex; flex-direction: column; background: #f4f4f4; }
.vs .end { height: 11px; display: flex; align-items: center; justify-content: center; background: #ddd; border: 1px solid #bbb; }
.track { flex: 1; padding-top: 167px; }
.vthumb { display: flex; align-items: center; justify-content: center; height: 75px; width: 10px; border: 1px solid #5a9ec2; background: linear-gradient(90deg, #e0f6fd, #9bd9f2); color: #357; font-size: 8px; }
.corner { height: 14px; }

.lower { height: 206px; border-top: 1px solid #aaa; display: flex; padding-top: 5px; }
.grip { width: 15px; padding-left: 3px; display: flex; flex-direction: column; }
.grip button { width: 7px; height: 7px; border: 1px solid #777; font-size: 6px; line-height: 4px; margin-bottom: 1px; color: #111; }
.grip button i { display: block; width: 3px; height: 3px; border: 1px solid #333; margin: 0 auto; }
.grip span { flex: 1; width: 4px; margin: 0 0 5px 2px; border: 1px solid #ccc; border-right-color: #999; }
.dialog { width: 448px; display: flex; flex-direction: column; }
.dtabs { display: flex; align-items: flex-end; height: 12px; }
.dtabs button { height: 11px; padding: 0 3px; border: 1px solid #999; border-bottom: 0; border-left: 0; background: #e6e6e6; min-width: 25px; text-align: left; }
.dtabs .on { height: 13px; background: #fff; border-left: 1px solid #999; padding: 0 4px; margin-bottom: -1px; position: relative; }
.page { background: #fff; border: 1px solid #aaa; height: 171px; padding: 3px 2px 0 3px; }
fieldset { min-width: 0; margin: 0; border: 1px solid #e9e9e9; padding: 0; border-radius: 2px; }
legend { padding: 0; margin-left: 3px; }
.types { display: flex; gap: 3px; margin-bottom: 4px; }
.types fieldset { height: 41px; padding: 3px 3px 0; }
.types .found { width: 71px; } .types .geo { width: 103px; } .types .coltype { width: 71px; margin-left: auto; margin-right: 147px; }
.types legend { margin-left: 0; }
.types fieldset button { width: 29px; height: 27px; border: 1px solid #999; background: linear-gradient(#f0f0f0, #d6d6d6); margin-right: 4px; }
.types fieldset button:last-child { margin-right: 0; }
.types fieldset .on { border-color: #3a6f93; background: linear-gradient(#d6ecf9, #8fc8ea); }
.types svg { width: 27px; height: 25px; }
.geom { display: flex; gap: 2px; }
.basic { width: 220px; height: 97px; }
.cols { display: flex; gap: 18px; padding-left: 5px; height: 72px; }
.row { display: flex; align-items: center; height: 15px; }
.row:nth-child(even) { height: 14px; }
.row > label:first-child { width: 19px; }
.colB .row > label:first-child { width: 18px; }
.colA { width: 80px; }
input[type="text"] { outline: 0; }
.basic input[type="text"] { width: 27px; height: 12px; border: 1px solid #ddd; border-top-color: #bbb; background: #fff; padding: 0 0 0 3px; }
.fx { display: flex; align-items: center; gap: 2px; margin-left: 4px; }
.colB .fx { margin-left: 8px; }
.fx input { appearance: none; width: 8px; height: 8px; border: 1px solid #889; background: #e9e8f6; position: relative; }
.fx input:checked::after { content: ""; position: absolute; left: 2px; top: 0; width: 2px; height: 4px; border: solid #3b3b7a; border-width: 0 1px 1px 0; transform: rotate(40deg); }
.count { display: flex; align-items: center; justify-content: flex-end; gap: 6px; padding-right: 70px; margin-top: 2px; }
.scheme { flex: 1; margin-top: 4px; height: 93px; border: 1px solid #eee; border-top-color: #444; border-left-color: #444; }
.scheme svg { width: 100%; height: 91px; }
.st { font-size: 7px; fill: #222; }
.acts { display: flex; justify-content: flex-end; gap: 6px; }
.acts button { width: 46px; height: 13px; border: 1px solid #888; border-radius: 2px; background: linear-gradient(#f4f4f4, #d9d9d9); }
.acts .def { border-color: #2f8fa8; box-shadow: inset 0 0 0 1px #8fdcec; }

.right { width: 21px; flex: none; display: flex; flex-direction: column; background: #d6d4ea; }
.sg { background: #f3f3f3; display: flex; flex-direction: column; align-items: center; gap: 2px; padding: 6px 0 0; position: relative; height: 130px; }
.sg svg { width: 14px; height: 16px; }
.sg button { width: 14px; height: 16px; flex: none; }
.sgap { height: 25px; }
.two { height: 184px; padding-top: 3px; border-top: 1px dotted #999; }
.sfill { flex: 1; }
.tip { position: absolute; right: 1px; top: 39px; height: 13px; padding: 0 2px; border: 1px solid #888; border-radius: 2px; background: linear-gradient(#fff, #e6e8f0); font-family: "Open Sans", sans-serif; line-height: 11px; white-space: nowrap; box-shadow: 1px 1px 2px #888; }
.sg .cursor { position: absolute; left: 10px; top: 27px; width: 8px; height: 12px; }

.mditabs { height: 13px; padding: 1px 2px; border-top: 1px solid #999; border-bottom: 1px solid #ccc; }
.mditabs button { height: 10px; background: #fff; padding: 0 8px 0 1px; font-family: Lato, sans-serif; }
.status { height: 11px; line-height: 10px; padding-left: 3px; font-family: "Open Sans", sans-serif; }
</style>
